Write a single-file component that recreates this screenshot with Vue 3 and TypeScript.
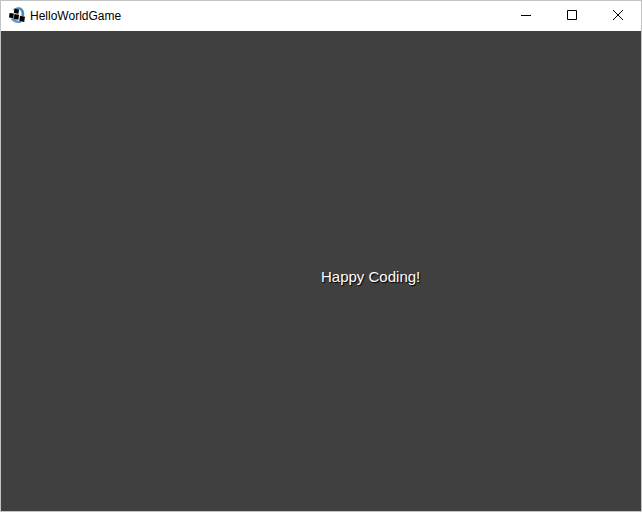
<script setup lang="ts">
import { ref } from 'vue'

const title = ref<string>('HelloWorldGame')
const message = ref<string>('Happy Coding!')
</script>

<template>
  <div class="window">
    <header class="titlebar">
      <svg class="app-icon" viewBox="0 0 16 16" aria-hidden="true">
        <path d="M3.4 3.4C5 1 8.6 -.4 11.4 .5C14.4 1.6 15.8 4.8 15 9.4L12.4 9C12.8 5.6 12.2 3.2 10.2 2.4C8 1.8 5.8 2.4 3.4 3.4Z" fill="#4a8cc6" />
        <path d="M1.6 11.4C3 14.2 6.6 16.8 11.8 15.8L12.6 14.2C9.4 14.2 6.6 13.2 5 11.2Z" fill="#5a98cd" />
        <path d="M5.4 1.8L10 2.5L9.5 6.7L4.8 5.9Z" />
        <path d="M.6 6L4.8 6.5L4.3 11.2L0 10.4Z" />
        <path d="M5.4 6.9L10 7.7L9.4 12.8L4.7 12Z" />
        <path d="M11 8.8L16 9.7L15.2 15L10.3 14Z" />
      </svg>
      <h1 class="title">{{ title }}</h1>
      <div class="controls">
        <button type="button" class="control" aria-label="Minimize">
          <svg viewBox="0 0 10 10" aria-hidden="true"><path d="M0 5.5H10" /></svg>
        </button>
        <button type="button" class="control" aria-label="Maximize">
          <svg viewBox="0 0 10 10" aria-hidden="true"><path d="M.5 .5H9.5V9.5H.5Z" /></svg>
        </button>
        <button type="button" class="control" aria-label="Close">
          <svg viewBox="0 0 10 10" aria-hidden="true"><path d="M0 0L10 10M10 0L0 10" /></svg>
        </button>
      </div>
    </header>
    <main class="stage">
      <p class="message">{{ message }}</p>
    </main>
  </div>
</template>

<style>
body {
  margin: 0;
}
</style>

<style scoped>
.window {
  box-sizing: border-box;
  display: flex;
  flex-direction: column;
  min-height: 100vh;
  border: 1px solid #c3c3c3;
  background: #fff;
}

.titlebar {
  box-sizing: border-box;
  display: flex;
  align-items: center;
  height: 30px;
  padding: 0 0 2px 8px;
  background: #fff;
}

.app-icon {
  width: 16px;
  height: 16px;
  margin-right: 5px;
}

.title {
  flex: 1;
  margin: 0;
  padding-top: 2px;
  font: 400 12px/16px "Liberation Sans", Arial, sans-serif;
  color: #000;
}

.controls {
  display: flex;
  align-self: stretch;
}

.control {
  display: flex;
  align-items: center;
  justify-content: center;
  width: 46px;
  padding: 0;
  border: 0;
  background: transparent;
}

.control:hover {
  background: #e5e5e5;
}

.control svg {
  width: 10px;
  height: 10px;
  fill: none;
  stroke: #000;
  stroke-width: 1;
}

.stage {
  flex: 1;
  display: grid;
  grid-template-columns: 1fr 1fr;
  align-items: center;
  background: #404040;
}

.message {
  grid-column: 2;
  margin: 0;
  padding-top: 12px;
  font: 400 15px/18px "Liberation Sans", Arial, sans-serif;
  color: #fff;
  text-shadow: 1px 1px 1px #000;
}
</style>
